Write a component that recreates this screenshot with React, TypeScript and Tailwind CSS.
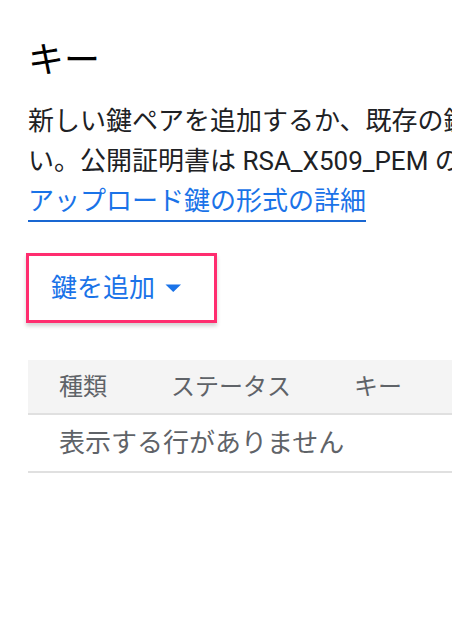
import React from "react";

export default function App() {
  return (
    <div className="w-[452px] h-[628px] overflow-hidden bg-white font-['Roboto','Noto_Sans_CJK_JP',sans-serif] text-[#202124]">
      <div className="w-[700px] pl-[28px]">
        <h1 className="mt-[37px] text-[36px] leading-[48px] font-normal text-[#000]">キー</h1>
        <div className="mt-[16px] text-[26px] leading-[40px] text-[#202124]">
          <div className="whitespace-nowrap">新しい鍵ペアを追加するか、既存の鍵ペアから公開証明書をアップロードしてくださ</div>
          <div className="whitespace-nowrap">い。公開証明書は RSA_X509_PEM の形式である必要があります。</div>
          <div>
            <a className="inline-block whitespace-nowrap leading-[38px] text-[#1a73e8] border-b-2 border-[#1967d2]">
              アップロード鍵の形式の詳細
            </a>
          </div>
        </div>
        <div className="mt-[31px] ml-[-2px]">
          <button className="flex items-center w-[191px] h-[70px] pl-[22px] border-[3px] border-[#ff2d6f] bg-white shadow-[0_3px_4px_rgba(0,0,0,0.18)] text-[26px] text-[#1a73e8]">
            <span className="leading-[40px]">鍵を追加</span>
            <svg className="ml-[1px]" width="34" height="34" viewBox="0 0 34 34">
              <path d="M9.5 13.5 L25 13.5 L17.25 21 Z" fill="#1a73e8" />
            </svg>
          </button>
        </div>
        <div className="mt-[37px] w-[650px]">
          <div className="flex items-center h-[55px] bg-[#f4f4f4] border-b-2 border-[#e0e0e0] text-[24px] text-[#5f6368]">
            <div className="w-[112px] pl-[31px]">種類</div>
            <div className="w-[183px] pl-[31px]">ステータス</div>
            <div className="pl-[31px]">キー</div>
          </div>
          <div className="flex items-center h-[58px] border-b-2 border-[#e0e0e0] pl-[31px] text-[26px] text-[#5f6368]">
            表示する行がありません
          </div>
        </div>
      </div>
    </div>
  );
}
